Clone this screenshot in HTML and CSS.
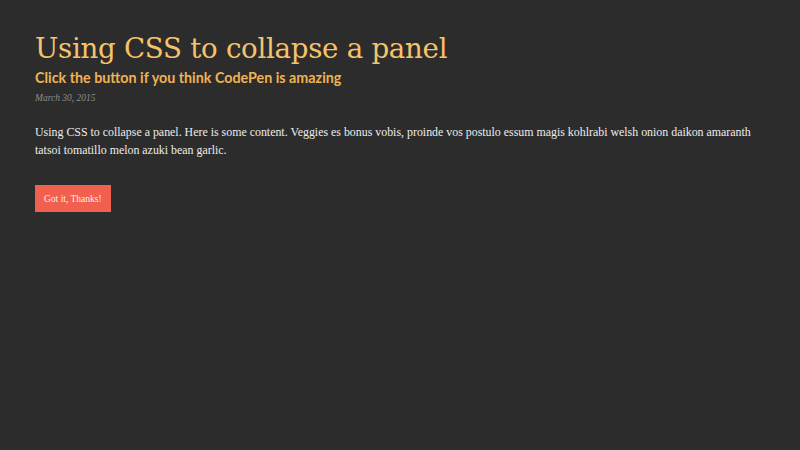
FILE: index.html
```html
<!DOCTYPE html>
<html lang="en">
<head>
<meta charset="utf-8">
<title>Using CSS to collapse a panel</title>
<link rel="stylesheet" href="styles.css">
</head>
<body>
<article class="panel">
  <header class="panel-head">
    <h1 class="panel-title">Using CSS to collapse a panel</h1>
    <h2 class="panel-sub">Click the button if you think CodePen is amazing</h2>
    <time class="panel-date">March 30, 2015</time>
  </header>
  <p class="panel-body">Using CSS to collapse a panel. Here is some content. Veggies es bonus vobis, proinde vos postulo essum magis kohlrabi welsh onion daikon amaranth tatsoi tomatillo melon azuki bean garlic.</p>
  <button class="panel-btn" type="button">Got it, Thanks!</button>
</article>
</body>
</html>
```
FILE: styles.css
```css
html, body {
  margin: 0;
  height: 100%;
  background: #2c2c2c;
}

.panel {
  padding: 30px 35px;
  display: flex;
  flex-direction: column;
  align-items: flex-start;
}

.panel-head {
  display: flex;
  flex-direction: column;
}

.panel-title {
  margin: 0;
  font-family: "DejaVu Serif", serif;
  font-weight: normal;
  font-size: 27.7px;
  line-height: 38px;
  color: #f4c36b;
  letter-spacing: -0.3px;
}

.panel-sub {
  margin: 0;
  font-family: Lato, "Liberation Sans", sans-serif;
  font-weight: bold;
  font-size: 14.3px;
  line-height: 20px;
  color: #f0b255;
}

.panel-date {
  margin-top: 2px;
  font-family: "Liberation Serif", serif;
  font-style: italic;
  font-size: 9.5px;
  line-height: 16px;
  color: #8c8c8c;
}

.panel-body {
  margin: 17px 0 0;
  font-family: "Liberation Serif", serif;
  font-size: 11.9px;
  line-height: 18px;
  color: #ececec;
}

.panel-btn {
  margin-top: 26px;
  border: 0;
  padding: 0 9px;
  height: 27px;
  background: #f15f4e;
  color: #fdeee8;
  font-family: "Liberation Serif", serif;
  font-size: 9.5px;
  cursor: pointer;
}
```
